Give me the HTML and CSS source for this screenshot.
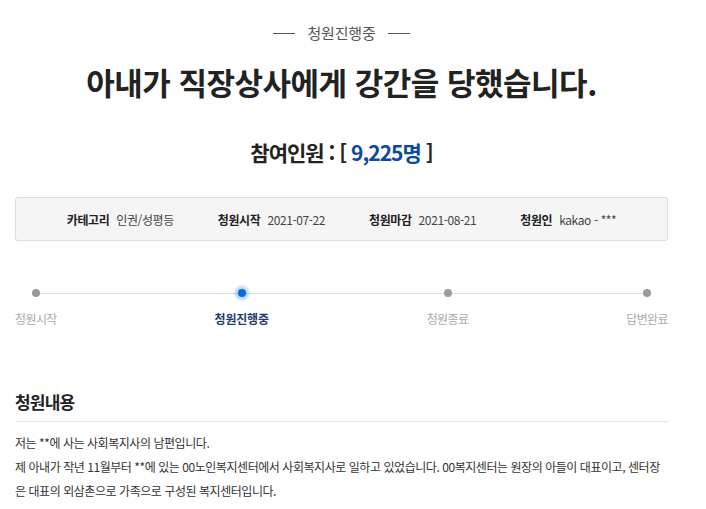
FILE: index.html
```html
<!DOCTYPE html>
<html lang="ko">
<head>
    <meta charset="UTF-8">
    <link rel="stylesheet" href="styles.css">
    <title>청원진행중</title>
</head>
<body>
    <div class="container">
        <div class="status"><span class="dash"></span>청원진행중<span class="dash"></span></div>
        <h1 class="title">아내가 직장상사에게 강간을 당했습니다.</h1>
        <div class="count">참여인원 : [ <span class="num">9,225명</span> ]</div>

        <ul class="info">
            <li><b>카테고리</b>인권/성평등</li>
            <li><b>청원시작</b>2021-07-22</li>
            <li><b>청원마감</b>2021-08-21</li>
            <li><b>청원인</b>kakao - ***</li>
        </ul>

        <div class="steps">
            <div class="step"><span class="dot"></span><span class="label">청원시작</span></div>
            <div class="step active"><span class="dot"></span><span class="label">청원진행중</span></div>
            <div class="step"><span class="dot"></span><span class="label">청원종료</span></div>
            <div class="step"><span class="dot"></span><span class="label">답변완료</span></div>
        </div>

        <h2 class="section-title">청원내용</h2>
        <div class="content">
            <p>저는 **에 사는 사회복지사의 남편입니다.</p>
            <p>제 아내가 작년 11월부터 **에 있는 00노인복지센터에서 사회복지사로 일하고 있었습니다. 00복지센터는 원장의 아들이 대표이고, 센터장은 대표의 외삼촌으로 가족으로 구성된 복지센터입니다.</p>
        </div>
    </div>
</body>
</html>
```

FILE: styles.css
```css
body {
    font-family: "Noto Sans CJK KR", "Noto Sans", sans-serif;
    background-color: #fff;
    color: #333;
    margin: 0;
    padding: 0;
}

.container {
    width: 653px;
    margin-left: 15px;
    padding-top: 23px;
}

.status {
    display: flex;
    align-items: center;
    justify-content: center;
    gap: 12px;
    font-size: 15px;
    line-height: 20px;
    color: #555;
    letter-spacing: -0.2px;
}

.dash {
    width: 22px;
    height: 1px;
    background-color: #555;
}

.title {
    margin: 19px 0 0;
    text-align: center;
    font-size: 31px;
    line-height: 40px;
    font-weight: bold;
    color: #222;
    letter-spacing: -0.5px;
}

.count {
    margin-top: 35px;
    text-align: center;
    font-size: 21px;
    line-height: 30px;
    font-weight: bold;
    color: #222;
    letter-spacing: -1px;
}

.count .num {
    color: #0d4a9e;
}

.info {
    list-style: none;
    margin: 30px 0 0;
    padding: 0;
    height: 42px;
    display: flex;
    align-items: center;
    justify-content: center;
    gap: 44px;
    background-color: #f5f5f5;
    border: 1px solid #ddd;
    border-radius: 3px;
    font-size: 12px;
    letter-spacing: -0.4px;
    color: #444;
}

.info b {
    color: #222;
    margin-right: 7px;
}

.steps {
    position: relative;
    display: flex;
    justify-content: space-between;
    margin-top: 48px;
}

.steps::before {
    content: "";
    position: absolute;
    top: 4px;
    left: 21px;
    right: 21px;
    height: 1px;
    background-color: #ddd;
}

.step {
    position: relative;
    display: flex;
    flex-direction: column;
    align-items: center;
}

.dot {
    width: 8px;
    height: 8px;
    border-radius: 50%;
    background-color: #9a9a9a;
}

.label {
    margin-top: 14px;
    font-size: 12px;
    line-height: 16px;
    color: #aaa;
    letter-spacing: -0.6px;
}

.step.active .dot {
    background-color: #0b6bd6;
    box-shadow: 0 0 3px 3px rgba(11, 107, 214, 0.3);
}

.step.active .label {
    color: #1f3b6e;
    font-weight: bold;
    letter-spacing: -0.2px;
}

.section-title {
    margin: 63px 0 0;
    padding-bottom: 7px;
    border-bottom: 1px solid #e5e5e5;
    font-size: 17px;
    line-height: 24px;
    font-weight: bold;
    color: #222;
    letter-spacing: -0.8px;
}

.content {
    margin-top: 9px;
    font-size: 12px;
    line-height: 24px;
    color: #333;
    letter-spacing: -0.45px;
}

.content p {
    margin: 0;
}
```
